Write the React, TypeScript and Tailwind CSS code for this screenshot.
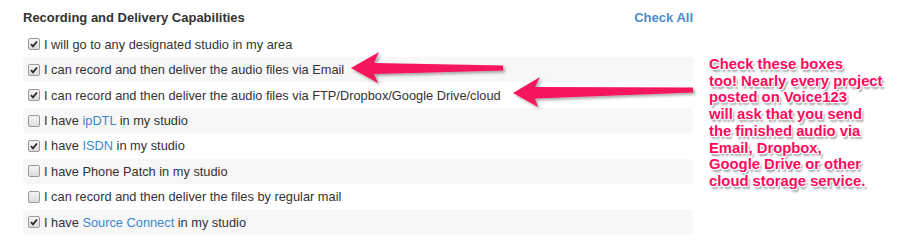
import React from "react";

type Row = {
  checked: boolean;
  parts: { text: string; link?: boolean }[];
};

const rows: Row[] = [
  { checked: true, parts: [{ text: "I will go to any designated studio in my area" }] },
  { checked: true, parts: [{ text: "I can record and then deliver the audio files via Email" }] },
  {
    checked: true,
    parts: [{ text: "I can record and then deliver the audio files via FTP/Dropbox/Google Drive/cloud" }],
  },
  { checked: false, parts: [{ text: "I have " }, { text: "ipDTL", link: true }, { text: " in my studio" }] },
  { checked: true, parts: [{ text: "I have " }, { text: "ISDN", link: true }, { text: " in my studio" }] },
  { checked: false, parts: [{ text: "I have Phone Patch in my studio" }] },
  { checked: false, parts: [{ text: "I can record and then deliver the files by regular mail" }] },
  {
    checked: true,
    parts: [{ text: "I have " }, { text: "Source Connect", link: true }, { text: " in my studio" }],
  },
];

const note = [
  "Check these boxes",
  "too! Nearly every project",
  "posted on Voice123",
  "will ask that you send",
  "the finished audio via",
  "Email, Dropbox,",
  "Google Drive or other",
  "cloud storage service.",
];

function Box({ checked }: { checked: boolean }) {
  return (
    <span className="flex h-[12px] w-[12px] items-center justify-center rounded-[2px] border border-[#9a9a9a] bg-gradient-to-b from-[#f4f4f4] to-[#dcdcdc]">
      {checked && (
        <svg width="8" height="8" viewBox="0 0 8 8">
          <path d="M1 4.2 L3 6.3 L7 1.5" fill="none" stroke="#2b2b2b" strokeWidth="1.8" />
        </svg>
      )}
    </span>
  );
}

export default function App() {
  return (
    <div className="relative h-[249px] w-[911px] overflow-hidden bg-white font-['Liberation_Sans',Arial,sans-serif] text-[#333]">
      <div className="w-[693px] pl-[23px] pt-[7px]">
        <div className="flex h-[22px] items-center justify-between">
          <span className="text-[13px] font-bold text-[#333]">Recording and Delivery Capabilities</span>
          <span className="text-[13px] font-bold text-[#4a8bd0]">Check All</span>
        </div>
        <div className="mt-[2.5px] flex flex-col">
          {rows.map((r, i) => (
            <div
              key={i}
              className={
                "flex h-[25.45px] items-center gap-[3px] rounded-[4px] pl-[5px] text-[12.8px] " +
                (i % 2 === 1 ? "bg-[#f7f7f7]" : "bg-white")
              }
            >
              <Box checked={r.checked} />
              <span className="ml-[1px]">
                {r.parts.map((p, j) =>
                  p.link ? (
                    <span key={j} className="text-[#3b87cf]">
                      {p.text}
                    </span>
                  ) : (
                    <span key={j}>{p.text}</span>
                  )
                )}
              </span>
            </div>
          ))}
        </div>
      </div>

      {/* arrows */}
      <svg className="absolute left-0 top-0" width="911" height="249" viewBox="0 0 911 249">
        <defs>
          <filter id="sh" x="-10%" y="-50%" width="120%" height="200%">
            <feDropShadow dx="2" dy="2" stdDeviation="1.5" floodColor="#000" floodOpacity="0.35" />
          </filter>
        </defs>
        <polygon
          points="351,68 379,52 374,63 503,65.5 503,70.5 374,74 378,83"
          fill="#f5145c"
          filter="url(#sh)"
        />
        <polygon
          points="513,93 540,77 535,87 693,87.5 693,92.5 535,98.5 538,107"
          fill="#f5145c"
          filter="url(#sh)"
        />
      </svg>

      {/* annotation */}
      <div className="absolute left-[709px] top-[56px] text-[14.8px] font-bold leading-[16.7px] text-[#ff0a5c] [text-shadow:-1px_-1px_0_#fff,1px_-1px_0_#fff,-1px_1px_0_#fff,1px_1px_0_#fff,2px_3px_2px_#999]">
        {note.map((l, i) => (
          <div key={i}>{l}</div>
        ))}
      </div>
    </div>
  );
}
